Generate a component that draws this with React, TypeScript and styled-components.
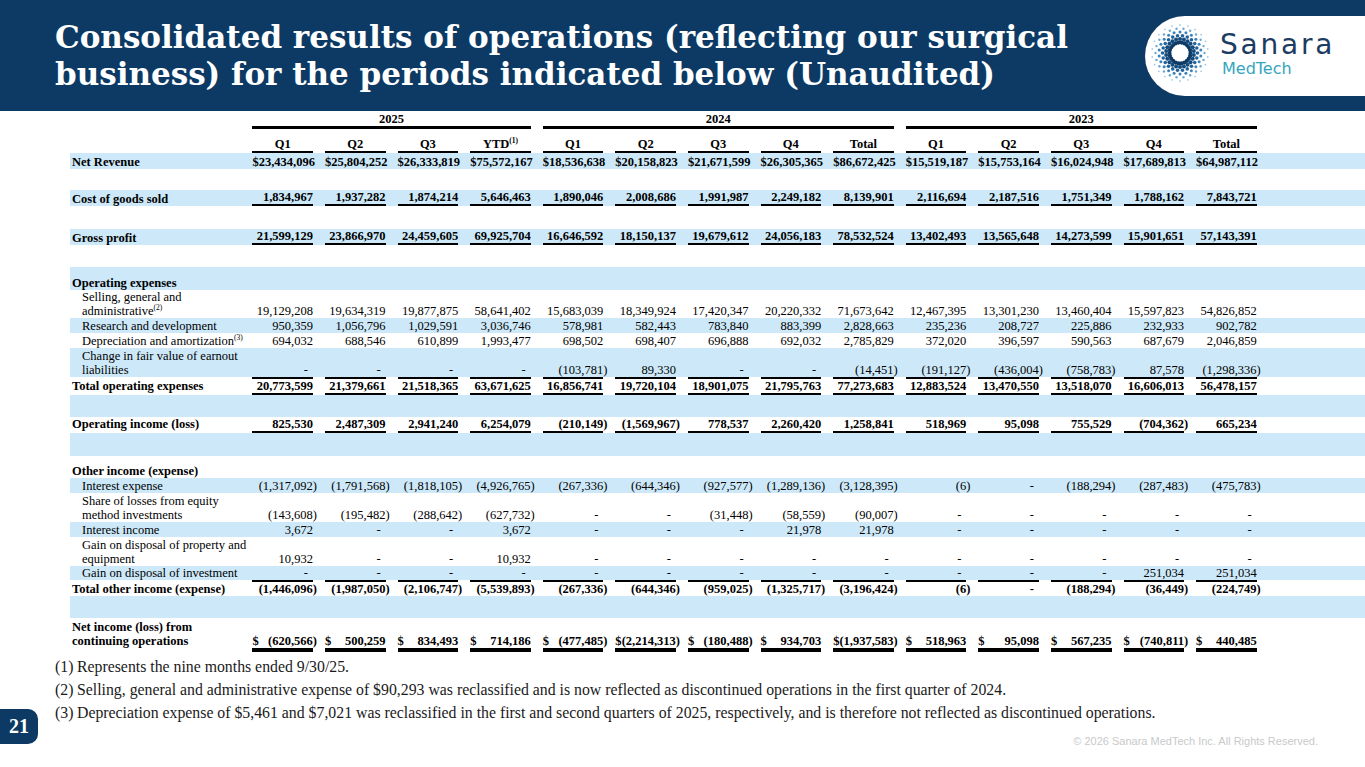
import React from "react";
import styled, { createGlobalStyle } from "styled-components";

const NAVY = "#0c3a64";
const BLUE = "#cde9f9";

const GlobalStyle = createGlobalStyle`
  html, body {
    margin: 0;
    padding: 0;
    background: #ffffff;
  }
  body {
    font-family: "Liberation Serif", "Times New Roman", serif;
    color: #000000;
  }
`;

const Slide = styled.div`
  width: 1365px;
  height: 767px;
  overflow: hidden;
  display: flex;
  flex-direction: column;
`;

const Header = styled.header`
  flex-shrink: 0;
  height: 111px;
  background-color: ${NAVY};
  display: flex;
  align-items: center;
`;

const Title = styled.h1`
  margin: 0;
  padding-left: 55px;
  font-family: "DejaVu Serif", Georgia, serif;
  font-weight: 700;
  font-size: 31px;
  line-height: 37px;
  color: #ffffff;
  white-space: nowrap;
`;

const LogoPanel = styled.div`
  margin-left: auto;
  width: 220px;
  height: 80px;
  box-sizing: border-box;
  padding-left: 4px;
  background-color: #ffffff;
  border-radius: 40px 0 0 40px;
  display: flex;
  align-items: center;
  gap: 9px;
`;

const SunBox = styled.div`
  display: flex;
  margin-top: -6px;
`;

const Wordmark = styled.div`
  display: flex;
  flex-direction: column;
  font-family: "DejaVu Sans", "Noto Sans", sans-serif;
  margin-top: -4px;
`;

const Sanara = styled.span`
  font-size: 28px;
  line-height: 30px;
  letter-spacing: 2.8px;
  color: #1c3c62;
`;

const MedTech = styled.span`
  font-size: 16px;
  line-height: 17px;
  color: #35a6bd;
  padding-left: 2px;
`;

const Table = styled.div`
  flex-shrink: 0;
  margin: 1px 0 0 70px;
  font-size: 12.5px;
`;

const Grid = styled.div<{ $h: number; $blue?: boolean; $bold?: boolean }>`
  display: grid;
  grid-template-columns: 174.4px repeat(14, 72.6px) 1.6px;
  align-items: end;
  height: ${(p) => p.$h}px;
  background-color: ${(p) => (p.$blue ? BLUE : "transparent")};
  font-weight: ${(p) => (p.$bold ? 700 : 400)};
`;

const Label = styled.div<{ $sub?: boolean; $pb?: number }>`
  padding-left: ${(p) => (p.$sub ? 12 : 2)}px;
  padding-bottom: ${(p) => p.$pb ?? 0}px;
  line-height: 14px;
  white-space: nowrap;
`;

const LabelHead = styled.span`
  font-weight: 700;
`;

const Sup = styled.sup`
  font-size: 7.5px;
  line-height: 0;
  vertical-align: 5px;
`;

type Line = "under" | "over" | "both" | "double";

const Cell = styled.div<{ $line?: Line }>`
  display: flex;
  justify-content: space-between;
  margin: 0 4px 0 8px;
  line-height: 14px;
  white-space: nowrap;
  border-top: ${(p) =>
    p.$line === "over" || p.$line === "both" ? "2px solid #000" : "none"};
  border-bottom: ${(p) =>
    p.$line === "under" || p.$line === "both"
      ? "2px solid #000"
      : p.$line === "double"
      ? "4px solid #000"
      : "none"};
`;

const Amount = styled.span<{ $kind: "pos" | "neg" | "dash" }>`
  margin-left: auto;
  margin-right: ${(p) =>
    p.$kind === "neg" ? "-4px" : p.$kind === "dash" ? "5px" : "0"};
`;

const YearCell = styled.div<{ $span: number }>`
  grid-column: span ${(p) => p.$span};
  margin: 0 4px 0 8px;
  text-align: center;
  line-height: 14px;
  font-weight: 700;
  border-bottom: 3px solid #000;
`;

const HeadCell = styled.div`
  margin: 0 4px 0 8px;
  text-align: center;
  line-height: 14px;
  font-weight: 700;
  border-bottom: 2px solid #000;
`;

const Bottom = styled.div`
  flex: 1;
  display: flex;
  align-items: flex-start;
`;

const PageBadge = styled.div`
  margin-top: 57px;
  width: 38px;
  height: 35px;
  flex-shrink: 0;
  background-color: ${NAVY};
  border-radius: 0 10px 10px 0;
  color: #ffffff;
  font-family: "Liberation Serif", serif;
  font-weight: 700;
  font-size: 20px;
  display: flex;
  align-items: center;
  justify-content: center;
`;

const Notes = styled.ol`
  flex: 1;
  min-width: 0;
  margin: 0;
  padding: 3px 0 0 17px;
  list-style: none;
  font-size: 15.8px;
  line-height: 23px;
  color: #1a1a1a;
`;

const Note = styled.li`
  display: flex;
  white-space: nowrap;
`;

const NoteMark = styled.span`
  width: 22px;
  flex-shrink: 0;
`;

const Copyright = styled.div`
  flex-shrink: 0;
  margin: 83px 47px 0 0;
  font-family: "Liberation Sans", Arial, sans-serif;
  font-size: 11px;
  line-height: 12px;
  color: #c9c9c9;
  white-space: nowrap;
`;

function SunMark() {
  const rings = [
    { r: 10.5, s: 2.1, c: "#0d3a66" },
    { r: 14, s: 2.0, c: "#144a7c" },
    { r: 17.5, s: 1.8, c: "#22639b" },
    { r: 21, s: 1.5, c: "#3a82b9" },
    { r: 24.5, s: 1.2, c: "#68a7d4" },
    { r: 28, s: 0.9, c: "#a2cce8" },
  ];
  const n = 22;
  return (
    <svg width="62" height="62" viewBox="-31 -31 62 62">
      {rings.flatMap((ring, i) =>
        Array.from({ length: n }, (_, k) => {
          const a = ((k + (i % 2) * 0.5) / n) * Math.PI * 2;
          return (
            <circle
              key={`${i}-${k}`}
              cx={ring.r * Math.cos(a)}
              cy={ring.r * Math.sin(a)}
              r={ring.s}
              fill={ring.c}
            />
          );
        })
      )}
    </svg>
  );
}

interface RowDef {
  label?: string;
  sup?: string;
  sub?: boolean;
  bold?: boolean;
  blue?: boolean;
  h: number;
  values?: string;
  line?: Line;
  dollar?: boolean;
  pb?: number;
}

const rows: RowDef[] = [
  {
    label: "Net Revenue",
    bold: true,
    blue: true,
    h: 16,
    values:
      "$23,434,096 $25,804,252 $26,333,819 $75,572,167 $18,536,638 $20,158,823 $21,671,599 $26,305,365 $86,672,425 $15,519,187 $15,753,164 $16,024,948 $17,689,813 $64,987,112",
  },
  { h: 21 },
  {
    label: "Cost of goods sold",
    bold: true,
    blue: true,
    h: 16,
    line: "under",
    values:
      "1,834,967 1,937,282 1,874,214 5,646,463 1,890,046 2,008,686 1,991,987 2,249,182 8,139,901 2,116,694 2,187,516 1,751,349 1,788,162 7,843,721",
  },
  { h: 23 },
  {
    label: "Gross profit",
    bold: true,
    blue: true,
    h: 16,
    line: "under",
    values:
      "21,599,129 23,866,970 24,459,605 69,925,704 16,646,592 18,150,137 19,679,612 24,056,183 78,532,524 13,402,493 13,565,648 14,273,599 15,901,651 57,143,391",
  },
  { h: 22 },
  { label: "Operating expenses", bold: true, blue: true, h: 23 },
  {
    label: "Selling, general and\nadministrative",
    sup: "(2)",
    sub: true,
    h: 28,
    values:
      "19,129,208 19,634,319 19,877,875 58,641,402 15,683,039 18,349,924 17,420,347 20,220,332 71,673,642 12,467,395 13,301,230 13,460,404 15,597,823 54,826,852",
  },
  {
    label: "Research and development",
    sub: true,
    blue: true,
    h: 15,
    values:
      "950,359 1,056,796 1,029,591 3,036,746 578,981 582,443 783,840 883,399 2,828,663 235,236 208,727 225,886 232,933 902,782",
  },
  {
    label: "Depreciation and amortization",
    sup: "(3)",
    sub: true,
    h: 15,
    values:
      "694,032 688,546 610,899 1,993,477 698,502 698,407 696,888 692,032 2,785,829 372,020 396,597 590,563 687,679 2,046,859",
  },
  {
    label: "Change in fair value of earnout\nliabilities",
    sub: true,
    blue: true,
    h: 29,
    values:
      "- - - - (103,781) 89,330 - - (14,451) (191,127) (436,004) (758,783) 87,578 (1,298,336)",
  },
  {
    label: "Total operating expenses",
    bold: true,
    h: 18,
    line: "both",
    pb: 2,
    values:
      "20,773,599 21,379,661 21,518,365 63,671,625 16,856,741 19,720,104 18,901,075 21,795,763 77,273,683 12,883,524 13,470,550 13,518,070 16,606,013 56,478,157",
  },
  { h: 22, blue: true },
  {
    label: "Operating income (loss)",
    bold: true,
    h: 16,
    line: "under",
    pb: 2,
    values:
      "825,530 2,487,309 2,941,240 6,254,079 (210,149) (1,569,967) 778,537 2,260,420 1,258,841 518,969 95,098 755,529 (704,362) 665,234",
  },
  { h: 23, blue: true },
  { label: "Other income (expense)", bold: true, h: 22 },
  {
    label: "Interest expense",
    sub: true,
    blue: true,
    h: 15,
    values:
      "(1,317,092) (1,791,568) (1,818,105) (4,926,765) (267,336) (644,346) (927,577) (1,289,136) (3,128,395) (6) - (188,294) (287,483) (475,783)",
  },
  {
    label: "Share of losses from equity\nmethod investments",
    sub: true,
    h: 29,
    values:
      "(143,608) (195,482) (288,642) (627,732) - - (31,448) (58,559) (90,007) - - - - -",
  },
  {
    label: "Interest income",
    sub: true,
    blue: true,
    h: 15,
    values: "3,672 - - 3,672 - - - 21,978 21,978 - - - - -",
  },
  {
    label: "Gain on disposal of property and\nequipment",
    sub: true,
    h: 29,
    values: "10,932 - - 10,932 - - - - - - - - - -",
  },
  {
    label: "Gain on disposal of investment",
    sub: true,
    blue: true,
    h: 14,
    values: "- - - - - - - - - - - - 251,034 251,034",
  },
  {
    label: "Total other income (expense)",
    bold: true,
    h: 16,
    line: "over",
    values:
      "(1,446,096) (1,987,050) (2,106,747) (5,539,893) (267,336) (644,346) (959,025) (1,325,717) (3,196,424) (6) - (188,294) (36,449) (224,749)",
  },
  { h: 22, blue: true },
  {
    label: "Net income (loss) from\ncontinuing operations",
    bold: true,
    h: 34,
    line: "double",
    dollar: true,
    pb: 4,
    values:
      "(620,566) 500,259 834,493 714,186 (477,485) (2,214,313) (180,488) 934,703 (1,937,583) 518,963 95,098 567,235 (740,811) 440,485",
  },
];

const years = [
  { year: "2025", cols: ["Q1", "Q2", "Q3", "YTD"] },
  { year: "2024", cols: ["Q1", "Q2", "Q3", "Q4", "Total"] },
  { year: "2023", cols: ["Q1", "Q2", "Q3", "Q4", "Total"] },
];

function amountKind(v: string): "pos" | "neg" | "dash" {
  if (v === "-") return "dash";
  if (v.endsWith(")")) return "neg";
  return "pos";
}

function RowLabel({ row }: { row: RowDef }) {
  const lines = (row.label ?? "").split("\n");
  const content = lines.map((text, i) => (
    <React.Fragment key={i}>
      {i > 0 && <br />}
      {text}
      {i === lines.length - 1 && row.sup ? <Sup>{row.sup}</Sup> : null}
    </React.Fragment>
  ));
  return (
    <Label $sub={row.sub} $pb={row.pb}>
      {row.bold ? <LabelHead>{content}</LabelHead> : content}
    </Label>
  );
}

function TableRow({ row }: { row: RowDef }) {
  const values = row.values ? row.values.split(" ") : [];
  return (
    <Grid $h={row.h} $blue={row.blue} $bold={row.bold}>
      <RowLabel row={row} />
      {values.map((v, i) => (
        <Cell key={i} $line={row.line}>
          {row.dollar ? <span>$</span> : null}
          <Amount $kind={amountKind(v)}>{v}</Amount>
        </Cell>
      ))}
    </Grid>
  );
}

export default function App() {
  return (
    <>
      <GlobalStyle />
      <Slide>
        <Header>
          <Title>
            Consolidated results of operations (reflecting our surgical
            <br />
            business) for the periods indicated below (Unaudited)
          </Title>
          <LogoPanel>
            <SunBox>
              <SunMark />
            </SunBox>
            <Wordmark>
              <Sanara>Sanara</Sanara>
              <MedTech>MedTech</MedTech>
            </Wordmark>
          </LogoPanel>
        </Header>

        <Table>
          <Grid $h={17}>
            <div />
            {years.map((y) => (
              <YearCell key={y.year} $span={y.cols.length}>
                {y.year}
              </YearCell>
            ))}
          </Grid>
          <Grid $h={24}>
            <div />
            {years.flatMap((y) =>
              y.cols.map((c) => (
                <HeadCell key={y.year + c}>
                  {c}
                  {c === "YTD" ? <Sup>(1)</Sup> : null}
                </HeadCell>
              ))
            )}
          </Grid>
          {rows.map((row, i) => (
            <TableRow key={i} row={row} />
          ))}
        </Table>

        <Bottom>
          <PageBadge>21</PageBadge>
          <Notes>
            <Note>
              <NoteMark>(1)</NoteMark>
              Represents the nine months ended 9/30/25.
            </Note>
            <Note>
              <NoteMark>(2)</NoteMark>
              Selling, general and administrative expense of $90,293 was
              reclassified and is now reflected as discontinued operations in
              the first quarter of 2024.
            </Note>
            <Note>
              <NoteMark>(3)</NoteMark>
              Depreciation expense of $5,461 and $7,021 was reclassified in the
              first and second quarters of 2025, respectively, and is therefore
              not reflected as discontinued operations.
            </Note>
          </Notes>
          <Copyright>© 2026 Sanara MedTech Inc. All Rights Reserved.</Copyright>
        </Bottom>
      </Slide>
    </>
  );
}
